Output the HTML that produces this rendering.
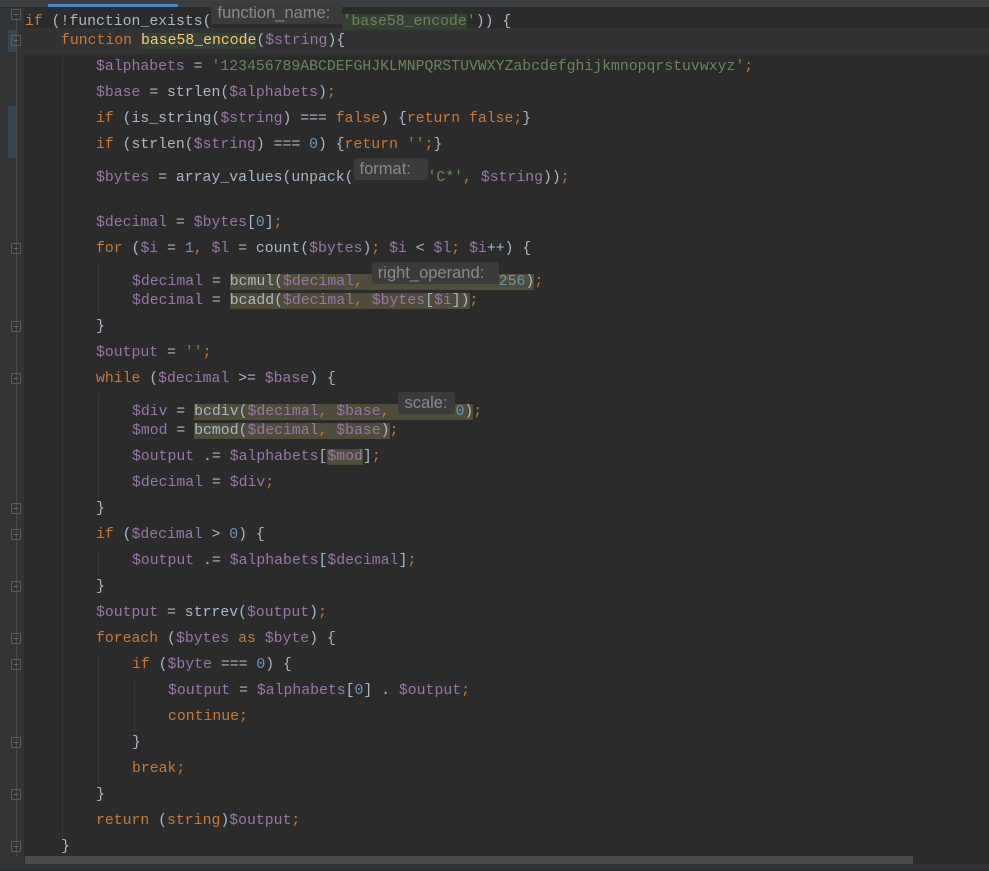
<!DOCTYPE html>
<html><head><meta charset="utf-8"><style>
body{margin:0;width:989px;height:869px;background:#2b2b2b;overflow:hidden;position:relative;font-family:"Liberation Mono",monospace;font-size:14.8px;color:#a9b7c6}
.gut{position:absolute;left:0;top:0;width:24px;height:869px;background:#313335}
.top{position:absolute;left:0;top:0;width:989px;height:7px;background:#3c3f41;border-bottom:1px solid #2a2a2a}
.tab{position:absolute;left:48px;top:4px;width:130px;height:3px;background:#4a88c7}
.cur{position:absolute;left:24px;top:28px;width:965px;height:26px;background:#323232}
.mod{position:absolute;left:8px;width:9px;background:#374752}
.l{position:absolute;height:26px;line-height:26px;white-space:pre}
.k{color:#cc7832}.v{color:#9876aa}.s{color:#6a8759}.n{color:#6897bb}
.h{display:inline-block;height:22px;line-height:22px;vertical-align:1px;background:#3b3b3b;color:#8a8a8a;font-family:"Liberation Sans",sans-serif;font-size:16.5px;border-radius:3px;box-sizing:border-box;padding-left:6px;overflow:hidden}
.hl{background:#4f4c39}
.hg{background:#344134}
.g{position:absolute;width:1px;background:#3a3a3a}
.fold{position:absolute;left:11px;width:10px;height:11px;border:1px solid #5a5d5f;box-sizing:border-box;border-radius:1px}
.fold:after{content:"";position:absolute;left:2px;top:4px;width:4px;height:1px;background:#6a6d6f}
.fl{position:absolute;left:16px;width:1px;background:#4a4d4f}
.sb{position:absolute;left:25px;top:856px;width:888px;height:8px;background:#4a4b4c}
.bot{position:absolute;left:0;top:864px;width:989px;height:5px;background:#313335}
.c{position:absolute;left:0;top:2px;width:989px;height:869px}
</style></head><body>
<div class="gut"></div>
<div class="top"></div><div class="tab"></div>
<div class="cur"></div>
<div class="mod" style="top:30px;height:22px"></div>
<div class="mod" style="top:106px;height:52px"></div>
<div class="fl" style="top:18px;height:838px"></div>
<div class="fold" style="top:9px"></div>
<div class="fold" style="top:35px"></div>
<div class="fold" style="top:243px"></div>
<div class="fold" style="top:321px"></div>
<div class="fold" style="top:373px"></div>
<div class="fold" style="top:503px"></div>
<div class="fold" style="top:529px"></div>
<div class="fold" style="top:581px"></div>
<div class="fold" style="top:633px"></div>
<div class="fold" style="top:659px"></div>
<div class="fold" style="top:737px"></div>
<div class="fold" style="top:789px"></div>
<div class="fold" style="top:841px"></div>
<div class="g" style="left:62px;top:58px;height:780px"></div>
<div class="g" style="left:98px;top:264px;height:50px"></div>
<div class="g" style="left:98px;top:394px;height:104px"></div>
<div class="g" style="left:98px;top:550px;height:26px"></div>
<div class="g" style="left:98px;top:654px;height:130px"></div>
<div class="g" style="left:134px;top:680px;height:52px"></div>
<div class="c">
<div class="l" style="left:25px;top:0px"><span class="k">if</span> (!function_exists(<span class="h" style="width:131px">function_name:</span><span class="s hg">'base58_encode</span><span class="s">'</span>)) {</div>
<div class="l" style="left:61px;top:26px"><span class="k">function</span> <span class="hg" style="color:#ffc66d">base58_encode</span>(<span class="v">$string</span>){</div>
<div class="l" style="left:96px;top:52px"><span class="v">$alphabets</span> = <span class="s">'123456789ABCDEFGHJKLMNPQRSTUVWXYZabcdefghijkmnopqrstuvwxyz'</span><span class="k">;</span></div>
<div class="l" style="left:96px;top:78px"><span class="v">$base</span> = strlen(<span class="v">$alphabets</span>)<span class="k">;</span></div>
<div class="l" style="left:96px;top:104px"><span class="k">if</span> (is_string(<span class="v">$string</span>) === <span class="k">false</span>) {<span class="k">return false;</span>}</div>
<div class="l" style="left:96px;top:130px"><span class="k">if</span> (strlen(<span class="v">$string</span>) === <span class="n">0</span>) {<span class="k">return </span><span class="s">''</span><span class="k">;</span>}</div>
<div class="l" style="left:96px;top:156px"><span class="v">$bytes</span> = array_values(unpack(<span class="h" style="width:74px">format:</span><span class="s">'C*'</span><span class="k">,</span> <span class="v">$string</span>))<span class="k">;</span></div>
<div class="l" style="left:96px;top:208px"><span class="v">$decimal</span> = <span class="v">$bytes</span>[<span class="n">0</span>]<span class="k">;</span></div>
<div class="l" style="left:96px;top:234px"><span class="k">for</span> (<span class="v">$i</span> = <span class="n">1</span><span class="k">,</span> <span class="v">$l</span> = count(<span class="v">$bytes</span>)<span class="k">;</span> <span class="v">$i</span> &lt; <span class="v">$l</span><span class="k">;</span> <span class="v">$i</span>++) {</div>
<div class="l" style="left:132px;top:260px"><span class="v">$decimal</span> = <span class="hl">bcmul(<span class="v">$decimal</span><span class="k">,</span> <span class="h" style="width:127px">right_operand:</span><span class="n">256</span>)</span><span class="k">;</span></div>
<div class="l" style="left:132px;top:286px"><span class="v">$decimal</span> = <span class="hl">bcadd(<span class="v">$decimal</span><span class="k">,</span> <span class="v">$bytes</span>[<span class="v">$i</span>])</span><span class="k">;</span></div>
<div class="l" style="left:96px;top:312px">}</div>
<div class="l" style="left:96px;top:338px"><span class="v">$output</span> = <span class="s">''</span><span class="k">;</span></div>
<div class="l" style="left:96px;top:364px"><span class="k">while</span> (<span class="v">$decimal</span> &gt;= <span class="v">$base</span>) {</div>
<div class="l" style="left:132px;top:390px"><span class="v">$div</span> = <span class="hl">bcdiv(<span class="v">$decimal</span><span class="k">,</span> <span class="v">$base</span><span class="k">,</span> <span class="h" style="width:57px">scale:</span><span class="n">0</span>)</span><span class="k">;</span></div>
<div class="l" style="left:132px;top:416px"><span class="v">$mod</span> = <span class="hl">bcmod(<span class="v">$decimal</span><span class="k">,</span> <span class="v">$base</span>)</span><span class="k">;</span></div>
<div class="l" style="left:132px;top:442px"><span class="v">$output</span> .= <span class="v">$alphabets</span>[<span class="v hl">$mod</span>]<span class="k">;</span></div>
<div class="l" style="left:132px;top:468px"><span class="v">$decimal</span> = <span class="v">$div</span><span class="k">;</span></div>
<div class="l" style="left:96px;top:494px">}</div>
<div class="l" style="left:96px;top:520px"><span class="k">if</span> (<span class="v">$decimal</span> &gt; <span class="n">0</span>) {</div>
<div class="l" style="left:132px;top:546px"><span class="v">$output</span> .= <span class="v">$alphabets</span>[<span class="v">$decimal</span>]<span class="k">;</span></div>
<div class="l" style="left:96px;top:572px">}</div>
<div class="l" style="left:96px;top:598px"><span class="v">$output</span> = strrev(<span class="v">$output</span>)<span class="k">;</span></div>
<div class="l" style="left:96px;top:624px"><span class="k">foreach</span> (<span class="v">$bytes</span> <span class="k">as</span> <span class="v">$byte</span>) {</div>
<div class="l" style="left:132px;top:650px"><span class="k">if</span> (<span class="v">$byte</span> === <span class="n">0</span>) {</div>
<div class="l" style="left:168px;top:676px"><span class="v">$output</span> = <span class="v">$alphabets</span>[<span class="n">0</span>] . <span class="v">$output</span><span class="k">;</span></div>
<div class="l" style="left:168px;top:702px"><span class="k">continue;</span></div>
<div class="l" style="left:132px;top:728px">}</div>
<div class="l" style="left:132px;top:754px"><span class="k">break;</span></div>
<div class="l" style="left:96px;top:780px">}</div>
<div class="l" style="left:96px;top:806px"><span class="k">return</span> (<span class="k">string</span>)<span class="v">$output</span><span class="k">;</span></div>
<div class="l" style="left:61px;top:832px">}</div>
</div>
<div class="sb"></div><div class="bot"></div>
</body></html>
